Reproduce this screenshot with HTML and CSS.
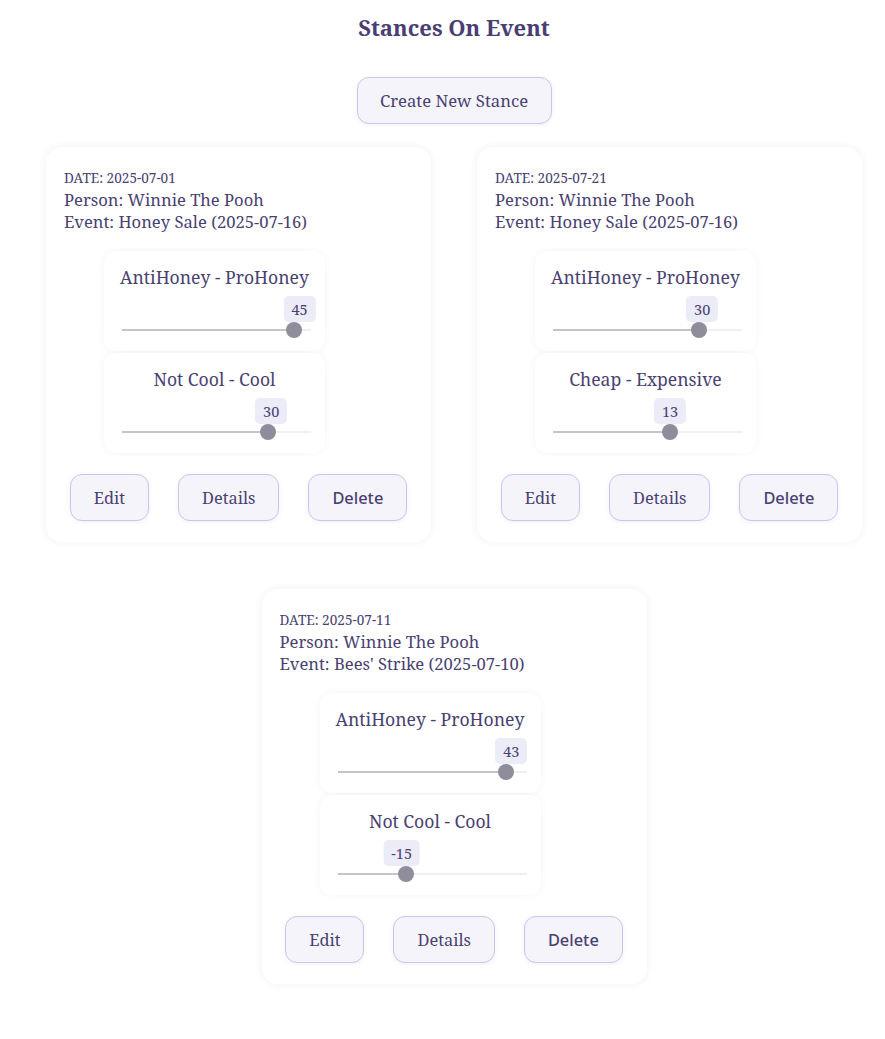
FILE: index.html
```html
<!DOCTYPE html>
<html lang="en">
<head>
<meta charset="utf-8">
<title>Stances On Event</title>
<link rel="stylesheet" href="styles.css">
</head>
<body>
<main class="page">
  <h1 class="title">Stances On Event</h1>
  <div class="create-row"><button class="btn create">Create New Stance</button></div>
  <div class="cards">
    <section class="card">
      <div class="date">DATE: 2025-07-01</div>
      <div class="line">Person: Winnie The Pooh</div>
      <div class="line">Event: Honey Sale (2025-07-16)</div>
      <div class="sliders">
        <div class="slider-box">
          <div class="label">AntiHoney - ProHoney</div>
          <div class="slider" style="--p:0.95"><span class="badge">45</span><div class="track"><div class="fill"></div><div class="thumb"></div></div></div>
        </div>
        <div class="slider-box">
          <div class="label">Not Cool - Cool</div>
          <div class="slider" style="--p:0.80"><span class="badge">30</span><div class="track"><div class="fill"></div><div class="thumb"></div></div></div>
        </div>
      </div>
      <div class="actions">
        <button class="btn">Edit</button>
        <button class="btn">Details</button>
        <button class="btn delete">Delete</button>
      </div>
    </section>
    <section class="card">
      <div class="date">DATE: 2025-07-21</div>
      <div class="line">Person: Winnie The Pooh</div>
      <div class="line">Event: Honey Sale (2025-07-16)</div>
      <div class="sliders">
        <div class="slider-box">
          <div class="label">AntiHoney - ProHoney</div>
          <div class="slider" style="--p:0.80"><span class="badge">30</span><div class="track"><div class="fill"></div><div class="thumb"></div></div></div>
        </div>
        <div class="slider-box">
          <div class="label">Cheap - Expensive</div>
          <div class="slider" style="--p:0.63"><span class="badge">13</span><div class="track"><div class="fill"></div><div class="thumb"></div></div></div>
        </div>
      </div>
      <div class="actions">
        <button class="btn">Edit</button>
        <button class="btn">Details</button>
        <button class="btn delete">Delete</button>
      </div>
    </section>
    <section class="card">
      <div class="date">DATE: 2025-07-11</div>
      <div class="line">Person: Winnie The Pooh</div>
      <div class="line">Event: Bees' Strike (2025-07-10)</div>
      <div class="sliders">
        <div class="slider-box">
          <div class="label">AntiHoney - ProHoney</div>
          <div class="slider" style="--p:0.93"><span class="badge">43</span><div class="track"><div class="fill"></div><div class="thumb"></div></div></div>
        </div>
        <div class="slider-box">
          <div class="label">Not Cool - Cool</div>
          <div class="slider" style="--p:0.35"><span class="badge">-15</span><div class="track"><div class="fill"></div><div class="thumb"></div></div></div>
        </div>
      </div>
      <div class="actions">
        <button class="btn">Edit</button>
        <button class="btn">Details</button>
        <button class="btn delete">Delete</button>
      </div>
    </section>
  </div>
</main>
</body>
</html>
```

FILE: styles.css
```css
html, body {
  margin: 0;
  padding: 0;
  background: #ffffff;
}

body {
  font-family: "Noto Serif", "DejaVu Serif", "Liberation Serif", serif;
  color: #4a3f72;
}

.page {
  width: 862px;
  margin-left: 23px;
}

.title {
  margin: 0;
  padding-top: 12px;
  font-size: 22px;
  line-height: 30px;
  font-weight: 700;
  text-align: center;
  color: #4a3d74;
}

.create-row {
  display: flex;
  justify-content: center;
  margin-top: 35px;
}

.btn {
  font-family: inherit;
  font-size: 16.4px;
  line-height: 20px;
  color: #4a3f72;
  background: #f5f4fa;
  border: 1px solid #cdc3ef;
  border-radius: 12px;
  height: 47px;
  padding: 0 23px;
  box-shadow: 0 1px 4px rgba(80, 70, 130, 0.08);
  cursor: pointer;
}

.create {
  width: 195px;
  padding: 0;
  font-size: 16.7px;
}

.cards {
  display: flex;
  flex-wrap: wrap;
  justify-content: center;
}

.card {
  width: 385px;
  box-sizing: border-box;
  margin: 23px 23px 24px;
  padding: 20px 18px 21px;
  background: #ffffff;
  border-radius: 16px;
  box-shadow: 0 0 10px rgba(0, 0, 0, 0.06);
}

.date {
  font-size: 13.6px;
  line-height: 22px;
}

.line {
  font-size: 16.6px;
  line-height: 22px;
}

.sliders {
  display: flex;
  flex-direction: column;
  gap: 2px;
  margin-top: 18px;
  margin-left: 40px;
}

.slider-box {
  width: 221px;
  height: 100px;
  box-sizing: border-box;
  padding-top: 14px;
  border-radius: 12px;
  background: #ffffff;
  box-shadow: 0 0 8px rgba(0, 0, 0, 0.045);
}

.label {
  text-align: center;
  font-size: 17.6px;
  line-height: 24px;
  white-space: nowrap;
}

.slider {
  position: relative;
  width: 189px;
  margin-top: 7px;
  margin-left: 18px;
}

.badge {
  display: inline-flex;
  align-items: center;
  height: 26px;
  padding: 0 8px;
  border-radius: 5px;
  background: #ecebf8;
  font-size: 14.5px;
  position: relative;
  left: calc(var(--p) * 100% - 2px);
  transform: translateX(-50%);
}

.track {
  position: relative;
  height: 16px;
}

.track::before {
  content: "";
  position: absolute;
  left: 0;
  right: 0;
  top: 7px;
  height: 2px;
  background: #efeff2;
}

.fill {
  position: absolute;
  left: 0;
  top: 7px;
  height: 2px;
  width: calc(8px + var(--p) * (100% - 16px));
  background: #c5c3cb;
}

.thumb {
  position: absolute;
  top: 0;
  width: 16px;
  height: 16px;
  border-radius: 50%;
  background: #8f8d9b;
  left: calc(var(--p) * (100% - 16px));
}

.actions {
  display: flex;
  justify-content: center;
  gap: 29px;
  margin-top: 21px;
}

.delete {
  font-family: "Noto Sans", "DejaVu Sans", sans-serif;
  font-weight: 500;
  font-size: 16.4px;
}
```
